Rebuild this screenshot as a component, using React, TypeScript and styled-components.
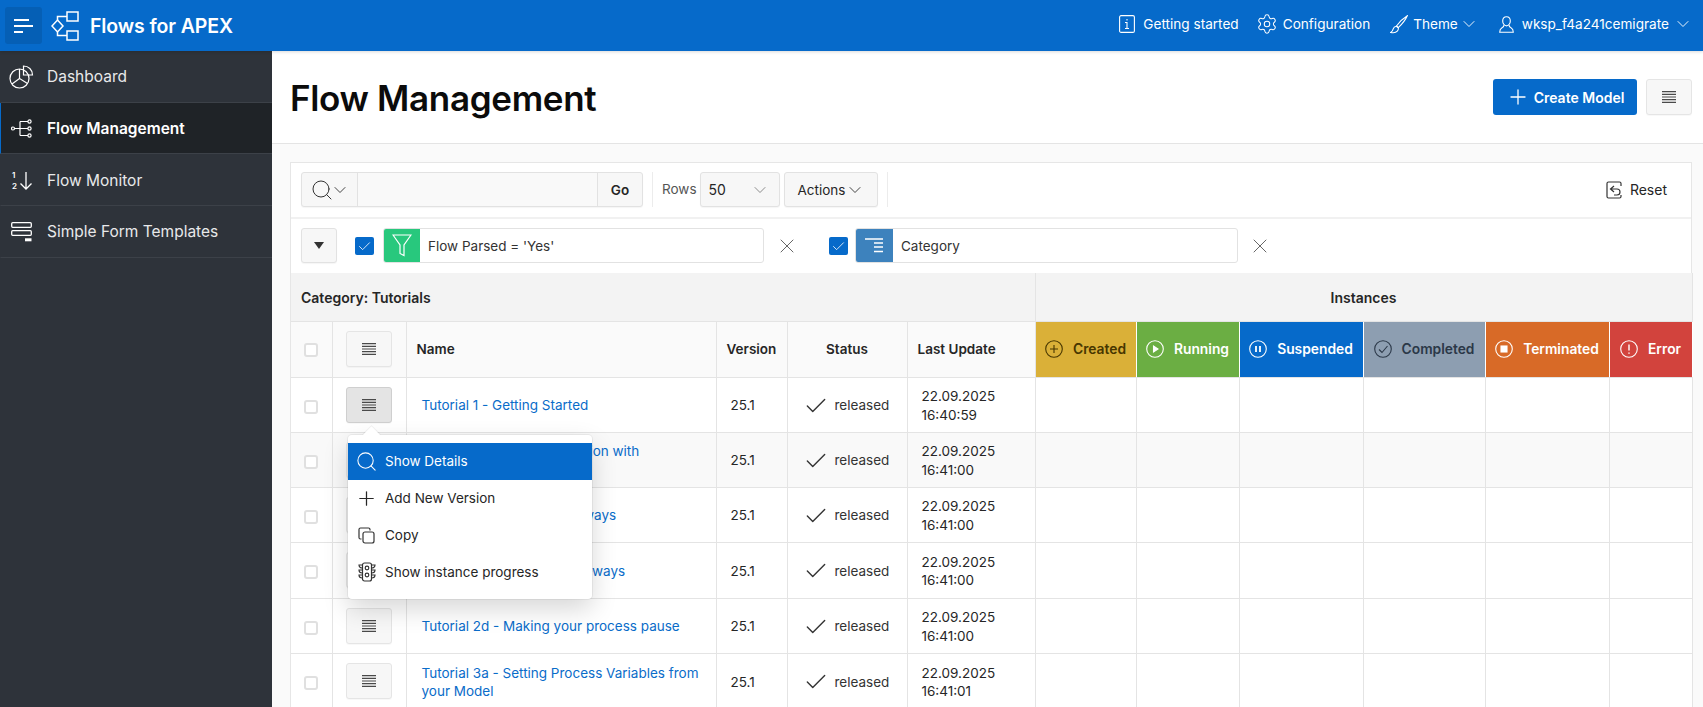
import React from "react";
import styled, { createGlobalStyle } from "styled-components";
import { Check, ChevronDown, Search, X, Plus, Settings } from "lucide-react";

const Global = createGlobalStyle`
  html, body { margin: 0; padding: 0; height: 100%; overflow: hidden; }
  body { font-family: Inter, "Noto Sans", "Liberation Sans", sans-serif; color: #262626; font-size: 14px; }
  * { box-sizing: border-box; }
`;

const Shell = styled.div`display: flex; flex-direction: column; height: 707px; width: 1703px; overflow: hidden;`;
const TopBar = styled.header`
  height: 51px; flex: none; background: #066aca; color: #fff; display: flex; align-items: center;
  padding: 0 10px 0 5px; position: relative; z-index: 3; box-shadow: 0 1px 3px rgba(0,0,0,.15);
`;
const BurgerBtn = styled.div`
  width: 37px; height: 37px; background: #055fb5; border-radius: 3px; display: flex; align-items: center; justify-content: center;
`;
const LogoWrap = styled.div`margin-left: 9px; display: flex; align-items: center;`;
const AppName = styled.div`margin-left: 11px; font-size: 19.5px; font-weight: 600; letter-spacing: -.1px;`;
const TopRight = styled.nav`margin-left: auto; display: flex; align-items: center; padding-bottom: 3px;`;
const TopItem = styled.div<{ $ml: number; $gap: number }>`
  display: flex; align-items: center; margin-left: ${p => p.$ml}px; font-size: 13.6px; font-weight: 400; gap: ${p => p.$gap}px; white-space: nowrap;
`;
const WideChevron = styled(ChevronDown)`margin: 0 0 0 -4px; flex: none;`;
const Body = styled.div`flex: 1; display: flex; min-height: 0;`;
const Side = styled.aside`width: 272px; flex: none; background: #2e333a;`;
const NavItem = styled.div<{ $on?: boolean }>`
  height: 51.67px; display: flex; align-items: center; padding-top: 1px; color: ${p => p.$on ? "#fff" : "#e8e9ea"};
  background: ${p => p.$on ? "#1f2327" : "transparent"};
  border-bottom: 1px solid #3c4148; border-left: 1px solid ${p => p.$on ? "#066aca" : "transparent"};
  font-size: 15.5px; font-weight: ${p => p.$on ? 600 : 400};
`;
const NavIcon = styled.span`width: 46px; flex: none; display: flex; justify-content: center; padding-right: 6px;`;
const Main = styled.main`flex: 1; min-width: 0; background: #fafafa;`;
const PageHead = styled.div`
  height: 93px; background: #fff; border-bottom: 1px solid #e4e4e4; display: flex; align-items: center;
  padding: 0 11px 0 18px;
`;
const Title = styled.h1`margin: 0; padding-top: 2px; font-size: 35px; font-weight: 600; color: #0b0b0b; letter-spacing: -.32px;`;
const HeadActions = styled.div`margin-left: auto; display: flex; gap: 9px;`;
const PrimaryBtn = styled.div`
  width: 144px; height: 36px; background: #066aca; border-radius: 3px; color: #fff; font-weight: 600; font-size: 14px;
  display: flex; align-items: center; justify-content: center; gap: 4px;
`;
const GhostBtn = styled.div<{ $active?: boolean }>`
  width: 46px; height: 36px; background: ${p => p.$active ? "#e4e4e4" : "#f7f7f7"}; border: 1px solid ${p => p.$active ? "#cfcfcf" : "#e5e5e5"}; border-radius: 3px;
  display: flex; align-items: center; justify-content: center; box-shadow: 0 1px 1px rgba(0,0,0,.03);
`;
const Card = styled.section`margin: 18px 11px 0 18px; background: #fff; border: 1px solid #e6e6e6; border-bottom: 0;`;
const Toolbar = styled.div`
  height: 56px; padding: 9px 10px 0; display: flex; align-items: flex-start; border-bottom: 2px solid #f1f1f1;
`;
const Group = styled.div`
  height: 35px; display: flex; border: 1px solid #e2e2e2; border-radius: 3px; background: #f7f7f7; box-shadow: 0 1px 1px rgba(0,0,0,.04);
`;
const SearchBtn = styled.div`width: 56px; display: flex; align-items: center; justify-content: center; border-right: 1px solid #e2e2e2;`;
const SearchField = styled.div`width: 239px; background: #f9f9f9;`;
const GoBtn = styled.div`width: 45px; border-left: 1px solid #e2e2e2; display: flex; align-items: center; justify-content: center; font-weight: 600; font-size: 13.5px;`;
const Sep = styled.div`width: 1px; height: 35px; background: #ececec; margin: 0 9px;`;
const RowsLabel = styled.div`line-height: 35px; color: #555; font-size: 13.5px; margin-right: 3px;`;
const SelectBox = styled(Group)`width: 80px; align-items: center; justify-content: space-between; padding: 0 9px 0 8px; font-size: 14px;`;
const ActionsBtn = styled(Group)`width: 94px; margin-left: 4px; padding-left: 2px; align-items: center; justify-content: center; font-size: 13.5px;`;
const ResetBtn = styled.div`margin-left: auto; display: flex; align-items: center; gap: 8px; height: 35px; padding-right: 14px; font-size: 14px;`;
const FilterRow = styled.div`height: 54px; padding: 9px 10px 0; display: flex; align-items: flex-start;`;
const Toggle = styled(Group)`width: 36px; align-items: center; justify-content: center;`;
const Triangle = styled.span`width: 0; height: 0; border: 5px solid transparent; border-top: 7px solid #333; border-bottom: 0;`;
const CheckBlue = styled.span<{ $ml: number; $mr: number }>`
  width: 19px; height: 18px; background: #066aca; border-radius: 2px; display: flex; align-items: center; justify-content: center; margin: 9px ${p => p.$mr}px 0 ${p => p.$ml}px;
`;
const Chip = styled.div<{ $w: number }>`
  width: ${p => p.$w}px; height: 35px; display: flex; border: 1px solid #e2e2e2; border-radius: 3px; overflow: hidden;
`;
const ChipIcon = styled.span<{ $bg: string; $w: number }>`width: ${p => p.$w}px; flex: none; margin: -1px 0 -1px -1px; background: ${p => p.$bg}; display: flex; align-items: center; justify-content: center;`;
const ChipText = styled.span`padding-left: 8px; line-height: 34px; font-size: 13.5px; color: #333;`;
const Close = styled.span<{ $w: number }>`width: ${p => p.$w}px; height: 35px; display: flex; align-items: center; justify-content: center; margin-left: 9px; color: #666;`;
const Table = styled.table`width: 1401px; border-collapse: collapse; table-layout: fixed;`;
const Col = styled.col<{ $w: number }>`width: ${p => p.$w}px;`;
const BandCell = styled.th<{ $center?: boolean }>`
  height: 48px; background: #f3f3f3; border-bottom: 1px solid #e4e4e4; border-right: 1px solid #e4e4e4; padding: 2px 10px 0;
  font-size: 14px; font-weight: 600; text-align: ${p => p.$center ? "center" : "left"};
`;
const HeadCell = styled.th<{ $center?: boolean; $pad?: number }>`
  height: 56px; background: #fafafa; border-right: 1px solid #e4e4e4; border-bottom: 1px solid #e4e4e4;
  font-size: 13.5px; font-weight: 600; padding: 0 0 1px ${p => p.$pad ?? 10}px; text-align: ${p => p.$center ? "center" : "left"};
`;
const StatusCell = styled.th<{ $bg: string; $fg: string }>`
  height: 56px; background: ${p => p.$bg}; color: ${p => p.$fg}; border-right: 1px solid #fff; border-bottom: 1px solid #e4e4e4;
  font-size: 13.8px; font-weight: 600; padding: 0 0 1px;
`;
const StatusInner = styled.div`display: flex; align-items: center; justify-content: center; gap: 10px;`;
const Row = styled.tr<{ $zebra?: boolean; $h: number }>`background: ${p => p.$zebra ? "#f9f9f9" : "#fff"}; height: ${p => p.$h}px;`;
const Cell = styled.td<{ $center?: boolean; $pad?: number }>`
  border-right: 1px solid #e4e4e4; border-bottom: 1px solid #e4e4e4; padding: 0 0 0 ${p => p.$pad ?? 0}px;
  font-size: 13.5px; line-height: 18.3px; text-align: ${p => p.$center ? "center" : "left"}; color: #262626;
`;
const TextCell = styled(Cell)`padding-top: 2px;`;
const Box = styled.span`display: inline-block; width: 14px; height: 14px; border: 2px solid #e0e0e0; border-radius: 3px; background: #fff; vertical-align: middle;`;
const BtnCentre = styled.div`position: relative; display: flex; justify-content: center;`;
const Link = styled.a`color: #0a6cc9; text-decoration: none; display: block; padding-right: 16px;`;
const Released = styled.div`display: flex; align-items: center; gap: 6px; padding-left: 15px; color: #333;`;
const Popup = styled.div`
  position: absolute; left: 15.5px; top: 48px; width: 244px; height: 164px; background: #fff; border-radius: 4px; padding: 8px 0; z-index: 5;
  box-shadow: 0 0 0 1px rgba(0,0,0,.05), 0 10px 26px rgba(0,0,0,.16); text-align: left;
  &::before { content: ""; position: absolute; left: 17px; top: -6px; width: 13px; height: 13px; background: #fff; transform: rotate(45deg); box-shadow: -1px -1px 0 rgba(0,0,0,.05); }
`;
const PopItem = styled.div<{ $on?: boolean }>`
  position: relative; height: 37px; display: flex; align-items: center; font-size: 13.5px; background: ${p => p.$on ? "#066aca" : "transparent"}; color: ${p => p.$on ? "#fff" : "#262626"};
`;
const PopIcon = styled.span`width: 37px; flex: none; display: flex; justify-content: center;`;

const Lines = ({ c = "#4a4a4a" }: { c?: string }) => (
  <svg width="14" height="12" viewBox="0 0 14 12" stroke={c} strokeWidth="1.2"><path d="M0 .7h14M0 3.300h14M0 6h14M0 8.700h14M0 11.300h14" /></svg>
);
const Burger = () => (
  <svg width="20" height="16" viewBox="0 0 20 16" stroke="#fff" strokeWidth="2"><path d="M0 2h15M0 8h19M0 14h9" /></svg>
);
const Logo = () => (
  <svg width="28" height="30" viewBox="0 0 28 30" fill="none" stroke="#fff" strokeWidth="1.500">
    <path d="M6.500 9 12 15l-5.500 6L1 15z" /><rect x="16" y="1" width="11" height="9" /><rect x="16" y="20" width="11" height="9" />
    <path d="M6.500 9V5.500H16M6.500 21v3.500H16" />
  </svg>
);
const Info = () => (
  <svg width="16" height="18" viewBox="0 0 16 18" fill="none" stroke="#fff" strokeWidth="1.100"><rect x=".6" y=".6" width="14.800" height="16.800" rx="1.500" /><path d="M6 7.500h2v6M6 13.500h4M8 4v1.400" /></svg>
);
const Brush = () => (
  <svg width="18" height="19" viewBox="0 0 18 19" fill="none" stroke="#fff" strokeWidth="1.100">
    <path d="M17.300.7C13.500 3 9 7.500 6.500 11l1.800 1.700C11.500 9.500 15.500 5 17.300.7z" />
    <path d="M6.300 11.200c-2 .3-2.800 1.500-3.200 3-.3 1.400-1 2.400-2.400 3.300 2.700.6 5.300.2 6.600-1.300 1-1.100 1.200-2.300 1-3.400z" />
  </svg>
);
const UserIcon = () => (
  <svg width="15" height="17" viewBox="0 0 15 17" fill="none" stroke="#fff" strokeWidth="1.100">
    <path d="M7.500.7c2.300 0 3.800 1.800 3.800 4.200s-1.600 5-3.800 5-3.800-2.600-3.800-5S5.200.7 7.500.7z" />
    <path d="M5 9c0 1.300-.6 2.100-2 2.800C1.500 12.600.7 13.800.7 16.300h13.600c0-2.500-.8-3.700-2.300-4.500-1.400-.7-2-1.500-2-2.800" />
  </svg>
);
const PieIcon = () => (
  <svg width="25" height="24" viewBox="0 0 25 24" fill="none" stroke="#fff" strokeWidth="1.200">
    <path d="M14.500 1c5 0 9 3.800 9 9h-9z" /><circle cx="10.500" cy="13.500" r="9.500" /><path d="M10.500 4v9.500l8 5M10.500 13.500 3 19" />
  </svg>
);
const TreeIcon = () => (
  <svg width="21" height="19" viewBox="0 0 21 19" fill="none" stroke="#fff" strokeWidth="1.200">
    <circle cx="2" cy="9.500" r="1.500" /><circle cx="18.500" cy="2.500" r="1.600" /><circle cx="18.500" cy="9.500" r="1.600" /><circle cx="18.500" cy="16.500" r="1.600" />
    <path d="M3.500 9.500H17M9 2.500v14M9 2.500h8M9 16.500h8" />
  </svg>
);
const NumText = styled.text`font: 600 8px Inter, sans-serif; fill: #fff;`;
const SortIcon = () => (
  <svg width="21" height="19" viewBox="0 0 21 19" fill="none" stroke="#fff" strokeWidth="1.300">
    <NumText x="1" y="7" stroke="none">1</NumText><NumText x="1" y="17.500" stroke="none">2</NumText>
    <path d="M15 1v17M9.500 12.500l5.500 5.500 5.500-5.500" />
  </svg>
);
const FormIcon = () => (
  <svg width="21" height="20" viewBox="0 0 21 20" fill="none" stroke="#fff" strokeWidth="1.300">
    <rect x=".7" y=".7" width="19.600" height="4.600" rx="1" /><rect x=".7" y="8.700" width="19.600" height="4.600" rx="1" /><path d="M14 17.800h6.500" strokeWidth="3" />
  </svg>
);
const ResetIcon = () => (
  <svg width="16" height="18" viewBox="0 0 16 18" fill="none" stroke="#333" strokeWidth="1.200">
    <path d="M15 5V2.500C15 1.500 14.500 1 13.500 1h-11C1.500 1 1 1.500 1 2.500v13c0 1 .5 1.500 1.500 1.500h11c1 0 1.500-.5 1.500-1.500V14" />
    <path d="M8 5 4.500 8 8 11M4.500 8H11c2 0 3 1.200 3 3s-1 3-3 3H8" />
  </svg>
);
const FunnelIcon = () => (
  <svg width="20" height="23" viewBox="0 0 20 23" fill="none" stroke="#fff" strokeWidth="1.200"><path d="M1 1h18l-7 10v10.500l-4-2V11z" /></svg>
);
const BreakIcon = () => (
  <svg width="20" height="15" viewBox="0 0 20 15" stroke="#fff" strokeWidth="1.300"><path d="M1 1h18M10 5h9M10 9h9M10 13.500h9" /></svg>
);
const Ring = ({ c, children }: { c: string; children: React.ReactNode }) => (
  <svg width="18" height="18" viewBox="0 0 18 18" fill="none" stroke={c} strokeWidth="1.100"><circle cx="9" cy="9" r="8.300" />{children}</svg>
);
const CopyIcon = () => (
  <svg width="17" height="17" viewBox="0 0 17 17" fill="none" stroke="#333" strokeWidth="1.200">
    <rect x="5" y="5" width="11" height="11" rx="2" /><path d="M3.500 12H2.500C1.500 12 1 11.500 1 10.500v-8C1 1.500 1.500 1 2.500 1h8c1 0 1.500.5 1.500 1.500v1" />
  </svg>
);
const LightIcon = () => (
  <svg width="18" height="20" viewBox="0 0 18 20" fill="none" stroke="#333" strokeWidth="1.200">
    <rect x="4.500" y="1" width="9" height="18" rx="2" /><circle cx="9" cy="6" r="1.800" /><circle cx="9" cy="13" r="1.800" />
    <path d="M4.500 3H1c0 2 1.500 3 3.500 3M13.500 3H17c0 2-1.500 3-3.500 3M4.500 8H1c0 2 1.500 3 3.500 3M13.500 8H17c0 2-1.500 3-3.500 3M4.500 13H1c0 2 1.500 3 3.500 3M13.500 13H17c0 2-1.500 3-3.500 3" />
  </svg>
);

const rows = [
  { name: "Tutorial 1 - Getting Started", date: "16:40:59", h: 55 },
  { name: <>Tutorial 2a - Basic Navigation with<br />Exclusive Gateways</>, date: "16:41:00", h: 55 },
  { name: "Tutorial 2b - Parallel Gateways", date: "16:41:00", h: 55 },
  { name: "Tutorial 2c - Inclusive Gateways", date: "16:41:00", h: 56 },
  { name: "Tutorial 2d - Making your process pause", date: "16:41:00", h: 55 },
  { name: "Tutorial 3a - Setting Process Variables from your Model", date: "16:41:01", h: 56 },
];
const statuses = [
  { l: "Created", bg: "#dab038", fg: "#473600", i: <path d="M9 5v8M5 9h8" /> },
  { l: "Running", bg: "#6bae43", fg: "#fff", i: <path d="M7.500 6v6l4.500-3z" fill="#fff" /> },
  { l: "Suspended", bg: "#066aca", fg: "#fff", i: <path d="M7 6v6M11 6v6" strokeWidth="1.800" /> },
  { l: "Completed", bg: "#8d9eb1", fg: "#2b3848", i: <path d="m5 9.500 3 3 5.500-6.500" /> },
  { l: "Terminated", bg: "#d86a27", fg: "#fff", i: <rect x="6" y="6" width="6" height="6" fill="#fff" /> },
  { l: "Error", bg: "#d2433d", fg: "#fff", i: <path d="M9 4.500v6M9 12.500v1.300" strokeWidth="1.400" /> },
];
const widths = [41, 74, 310, 71, 120, 128, 101, 103, 124, 122, 124, 83];

export default function App() {
  return (
    <Shell>
      <Global />
      <TopBar>
        <BurgerBtn><Burger /></BurgerBtn>
        <LogoWrap><Logo /></LogoWrap>
        <AppName>Flows for APEX</AppName>
        <TopRight>
          <TopItem $ml={0} $gap={8}><Info />Getting started</TopItem>
          <TopItem $ml={17} $gap={5}><Settings size={22} strokeWidth={1.100} />Configuration</TopItem>
          <TopItem $ml={20} $gap={5}><Brush />Theme<WideChevron size={20} strokeWidth={1.100} /></TopItem>
          <TopItem $ml={20} $gap={8}><UserIcon />wksp_f4a241cemigrate<WideChevron size={20} strokeWidth={1.100} /></TopItem>
        </TopRight>
      </TopBar>
      <Body>
        <Side>
          <NavItem><NavIcon><PieIcon /></NavIcon>Dashboard</NavItem>
          <NavItem $on><NavIcon><TreeIcon /></NavIcon>Flow Management</NavItem>
          <NavItem><NavIcon><SortIcon /></NavIcon>Flow Monitor</NavItem>
          <NavItem><NavIcon><FormIcon /></NavIcon>Simple Form Templates</NavItem>
        </Side>
        <Main>
          <PageHead>
            <Title>Flow Management</Title>
            <HeadActions>
              <PrimaryBtn><Plus size={24} strokeWidth={1.300} />Create Model</PrimaryBtn>
              <GhostBtn><Lines /></GhostBtn>
            </HeadActions>
          </PageHead>
          <Card>
            <Toolbar>
              <Group>
                <SearchBtn><Search size={24} strokeWidth={1.000} color="#333" /><WideChevron size={20} strokeWidth={1.100} color="#333" /></SearchBtn>
                <SearchField />
                <GoBtn>Go</GoBtn>
              </Group>
              <Sep />
              <RowsLabel>Rows</RowsLabel>
              <SelectBox>50<ChevronDown size={20} strokeWidth={1.000} color="#777" /></SelectBox>
              <ActionsBtn>Actions<ChevronDown size={20} strokeWidth={1.100} color="#333" /></ActionsBtn>
              <Sep />
              <ResetBtn><ResetIcon />Reset</ResetBtn>
            </Toolbar>
            <FilterRow>
              <Toggle><Triangle /></Toggle>
              <CheckBlue $ml={18} $mr={9}><Check size={15} strokeWidth={1.300} color="#fff" /></CheckBlue>
              <Chip $w={381}><ChipIcon $w={37} $bg="#28c87d"><FunnelIcon /></ChipIcon><ChipText>Flow Parsed = 'Yes'</ChipText></Chip>
              <Close $w={28}><X size={24} strokeWidth={1.000} /></Close>
              <CheckBlue $ml={28} $mr={7}><Check size={15} strokeWidth={1.300} color="#fff" /></CheckBlue>
              <Chip $w={383}><ChipIcon $w={38} $bg="#3d82bd"><BreakIcon /></ChipIcon><ChipText>Category</ChipText></Chip>
              <Close $w={26}><X size={24} strokeWidth={1.000} /></Close>
            </FilterRow>
            <Table>
              <colgroup>{widths.map((w, i) => <Col key={i} $w={w} />)}</colgroup>
              <thead>
                <tr>
                  <BandCell colSpan={6}>Category: Tutorials</BandCell>
                  <BandCell colSpan={6} $center>Instances</BandCell>
                </tr>
                <tr>
                  <HeadCell $center $pad={0}><Box /></HeadCell>
                  <HeadCell $pad={0}><BtnCentre><GhostBtn><Lines /></GhostBtn></BtnCentre></HeadCell>
                  <HeadCell>Name</HeadCell>
                  <HeadCell>Version</HeadCell>
                  <HeadCell $center $pad={0}>Status</HeadCell>
                  <HeadCell>Last Update</HeadCell>
                  {statuses.map(s => (
                    <StatusCell key={s.l} $bg={s.bg} $fg={s.fg}>
                      <StatusInner><Ring c={s.fg}>{s.i}</Ring>{s.l}</StatusInner>
                    </StatusCell>
                  ))}
                </tr>
              </thead>
              <tbody>
                {rows.map((r, i) => (
                  <Row key={i} $h={r.h} $zebra={i === 1}>
                    <TextCell $center><Box /></TextCell>
                    <Cell>
                      <BtnCentre>
                        <GhostBtn $active={i === 0}><Lines /></GhostBtn>
                        {i === 0 && (
                          <Popup>
                            <PopItem $on><PopIcon><Search size={23} strokeWidth={1.100} /></PopIcon>Show Details</PopItem>
                            <PopItem><PopIcon><Plus size={23} strokeWidth={1.300} /></PopIcon>Add New Version</PopItem>
                            <PopItem><PopIcon><CopyIcon /></PopIcon>Copy</PopItem>
                            <PopItem><PopIcon><LightIcon /></PopIcon>Show instance progress</PopItem>
                          </Popup>
                        )}
                      </BtnCentre>
                    </Cell>
                    <TextCell $pad={15}><Link>{r.name}</Link></TextCell>
                    <TextCell $pad={14}>25.1</TextCell>
                    <TextCell><Released><Check size={26} strokeWidth={1.300} />released</Released></TextCell>
                    <TextCell $pad={14}>22.09.2025<br />{r.date}</TextCell>
                    {statuses.map(s => <Cell key={s.l} />)}
                  </Row>
                ))}
              </tbody>
            </Table>
          </Card>
        </Main>
      </Body>
    </Shell>
  );
}
